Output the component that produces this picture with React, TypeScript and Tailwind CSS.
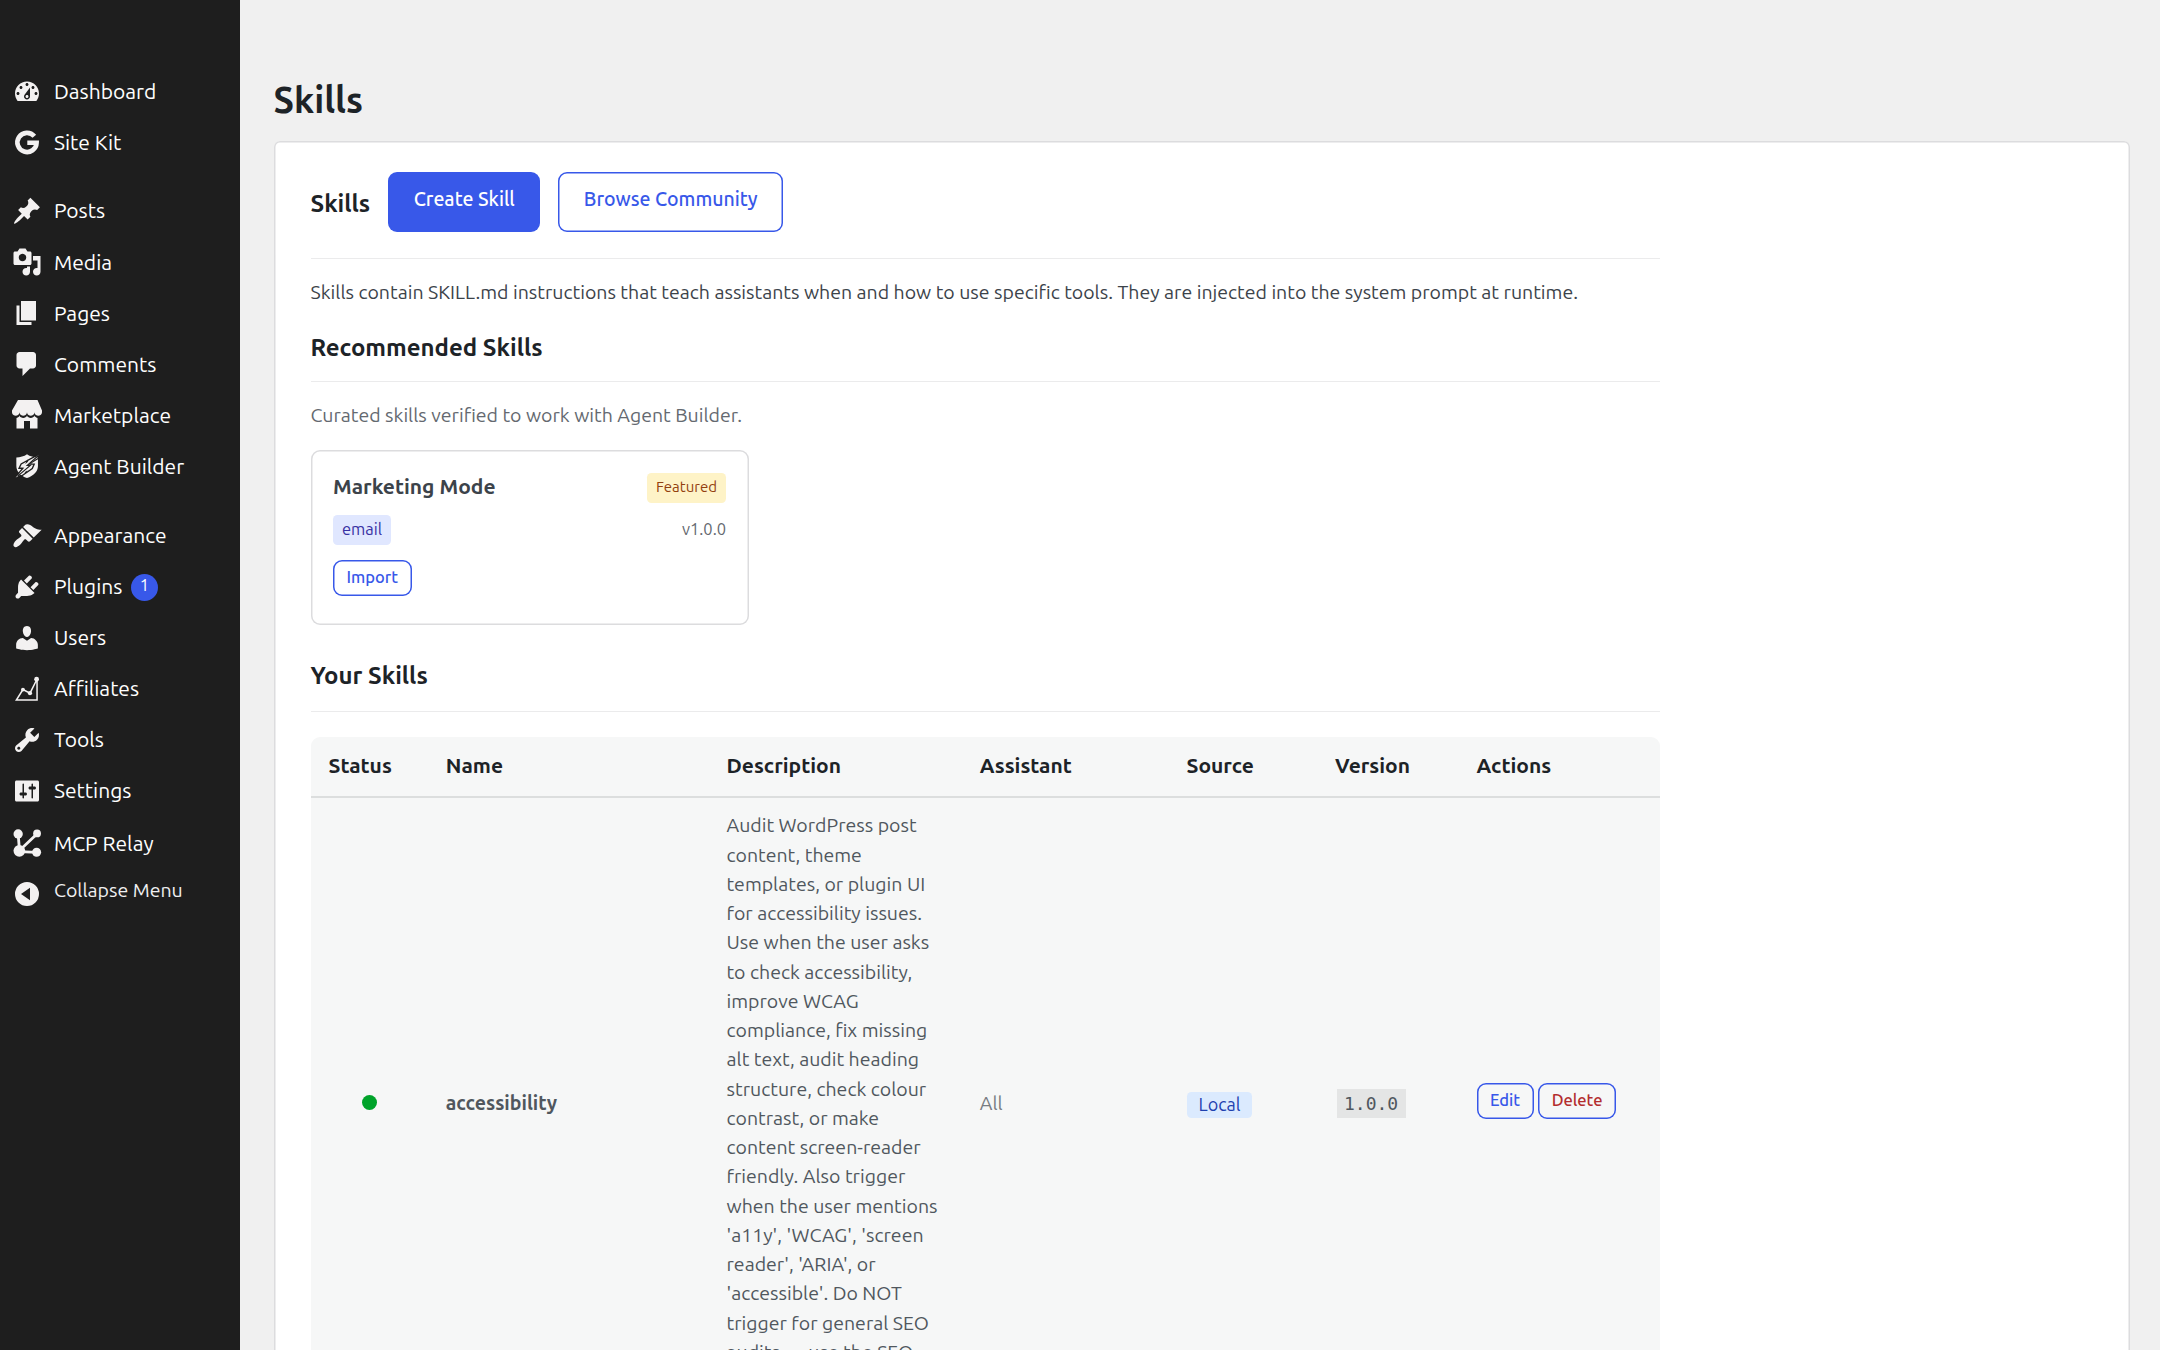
import { Fragment, type ReactNode } from "react";

type MenuEntry = {
  label: string;
  icon: ReactNode;
  badge?: number;
  gapBefore?: string;
  height?: string;
};

function Dashicon({ d }: { d: string }) {
  return (
    <svg viewBox="0 0 20 20" className="size-[30px] fill-current">
      <path d={d} />
    </svg>
  );
}

const MENU: MenuEntry[] = [
  {
    label: "Dashboard",
    icon: (
      <Dashicon d="M3.76 16h12.48c1.1-1.37 1.76-3.11 1.76-5 0-4.42-3.58-8-8-8s-8 3.58-8 8c0 1.89.66 3.63 1.76 5zM10 4c.55 0 1 .45 1 1s-.45 1-1 1-1-.45-1-1 .45-1 1-1zM6 6c.55 0 1 .45 1 1s-.45 1-1 1-1-.45-1-1 .45-1 1-1zm8 0c.55 0 1 .45 1 1s-.45 1-1 1-1-.45-1-1 .45-1 1-1zm-5.37 5.55L12 7v6c0 1.1-.9 2-2 2s-2-.9-2-2c0-.57.24-1.08.63-1.45zM4 10c.55 0 1 .45 1 1s-.45 1-1 1-1-.45-1-1 .45-1 1-1zm12 0c.55 0 1 .45 1 1s-.45 1-1 1-1-.45-1-1 .45-1 1-1zm-5 3c0-.55-.45-1-1-1s-1 .45-1 1 .45 1 1 1 1-.45 1-1z" />
    ),
  },
  {
    label: "Site Kit",
    icon: (
      <svg viewBox="0 0 20 20" className="size-[30px] fill-none stroke-current">
        <path d="M14.9 5.5A6.4 6.4 0 1 0 16.4 9.8H10.2" strokeWidth="3.1" />
      </svg>
    ),
  },
  {
    label: "Posts",
    gapBefore: "h-[17px]",
    height: "h-[51.75px]",
    icon: (
      <Dashicon d="M10.44 3.02l1.82-1.82 6.36 6.35-1.83 1.82c-1.05-.68-2.48-.57-3.41.36l-.75.75c-.92.93-1.04 2.35-.35 3.41l-1.83 1.82-2.41-2.41-2.8 2.79c-.42.42-3.38 2.71-3.8 2.29s1.86-3.39 2.28-3.81l2.79-2.79L4.1 9.36l1.83-1.82c1.05.69 2.48.57 3.4-.36l.75-.75c.93-.92 1.05-2.35.36-3.41z" />
    ),
  },
  {
    label: "Media",
    icon: (
      <Dashicon d="M13 11V4c0-.55-.45-1-1-1h-1.67L9 1H5L3.67 3H2c-.55 0-1 .45-1 1v7c0 .55.45 1 1 1h10c.55 0 1-.45 1-1zM7 4.5c1.38 0 2.5 1.12 2.5 2.5S8.38 9.5 7 9.5 4.5 8.38 4.5 7 5.62 4.5 7 4.5zM14 6h5v10.5c0 1.38-1.12 2.5-2.5 2.5S14 17.88 14 16.5s1.12-2.5 2.5-2.5c.17 0 .34.02.5.05V9h-3V6zm-4 8.05V13h2v3.5c0 1.38-1.12 2.5-2.5 2.5S7 17.88 7 16.5 8.12 14 9.5 14c.17 0 .34.02.5.05z" />
    ),
  },
  {
    label: "Pages",
    icon: <Dashicon d="M6 15V2h10v13H6zm-1 1h8v2H3V5h2v11z" />,
  },
  {
    label: "Comments",
    icon: (
      <Dashicon d="M5 2h9c1.1 0 2 .9 2 2v7c0 1.1-.9 2-2 2h-2l-5 5v-5H5c-1.1 0-2-.9-2-2V4c0-1.1.9-2 2-2z" />
    ),
  },
  {
    label: "Marketplace",
    icon: (
      <Dashicon d="M1 10c.41.29.96.43 1.5.43.55 0 1.09-.14 1.5-.43.62-.46 1-1.17 1-2 0 .83.37 1.54 1 2 .41.29.96.43 1.5.43.55 0 1.09-.14 1.5-.43.62-.46 1-1.17 1-2 0 .83.37 1.54 1 2 .41.29.96.43 1.51.43.54 0 1.08-.14 1.49-.43.62-.46 1-1.17 1-2 0 .83.37 1.54 1 2 .41.29.96.43 1.5.43.55 0 1.09-.14 1.5-.43.63-.46 1-1.17 1-2V7l-3-7H4L0 7v1c0 .83.37 1.54 1 2zm2 8.99h5v-5h4v5h5v-7c-.37-.05-.72-.22-1-.43-.63-.45-1-.73-1-1.56 0 .83-.38 1.11-1 1.56-.41.3-.95.43-1.49.44-.55 0-1.1-.14-1.51-.44-.63-.45-1-.73-1-1.56 0 .83-.38 1.11-1 1.56-.41.3-.95.43-1.5.44-.54 0-1.09-.14-1.5-.44-.63-.45-1-.73-1-1.57 0 .84-.38 1.12-1 1.57-.29.21-.63.38-1 .44v6.99z" />
    ),
  },
  {
    label: "Agent Builder",
    icon: (
      <svg viewBox="0 0 20 20" className="size-[30px]">
        <path
          className="fill-current"
          d="M10 2.2C12 3.6 14.5 4.3 17.3 4.3V10C17.3 13.7 14.3 16.7 10 18C5.7 16.7 2.9 13.7 2.9 10V4.3C5.5 4.3 8 3.6 10 2.2Z"
        />
        <path
          className="fill-none stroke-[#1e1e1e]"
          strokeWidth="0.9"
          d="M17.8 2.2L6.1 8.6L4.7 11.5H7.3L2 17.6M18.2 4.5L11.4 8.7H14.8L13.5 11.7L4.7 17.8M10.8 5.8L8.6 10H11.3L8.8 14.6"
        />
        <path
          className="fill-current"
          d="M18 2.5L8.5 8.8L7 10.8H9.6L2 18L11.6 12.2L13 10H10.4Z"
        />
        <path
          className="fill-none stroke-[#1e1e1e]"
          strokeWidth="0.8"
          d="M17.6 3L10.2 9.6H12.2L4 16.6"
        />
      </svg>
    ),
  },
  {
    label: "Appearance",
    gapBefore: "h-[18.25px]",
    icon: (
      <Dashicon d="M14.48 11.06L7.41 3.99l1.5-1.5c.5-.56 2.3-.47 3.51.32 1.21.8 1.43 1.28 2.91 2.1 1.18.64 2.45 1.26 4.45.85zm-.71.71L6.7 4.7 4.93 6.47c-.39.39-.39 1.02 0 1.41l1.06 1.06c.39.39.39 1.03 0 1.42-.6.6-1.43 1.11-2.21 1.69-.35.26-.7.53-1.01.84C1.43 14.23.4 16.08 1.4 17.07c.99 1 2.84-.03 4.18-1.36.31-.31.58-.66.85-1.02.57-.78 1.08-1.61 1.69-2.21.39-.39 1.02-.39 1.41 0l1.06 1.06c.39.39 1.02.39 1.41 0z" />
    ),
  },
  {
    label: "Plugins",
    badge: 1,
    icon: (
      <Dashicon d="M13.11 4.36L9.87 7.6 8 5.73l3.24-3.24c.35-.34 1.05-.2 1.56.32.52.51.66 1.21.31 1.55zm-8 1.77l.91-1.12 9.01 9.01-1.19.84c-.71.71-2.63 1.16-3.82 1.16H6.14L4.9 17.26c-.59.59-1.54.59-2.12 0-.59-.58-.59-1.53 0-2.12l1.24-1.24v-3.88c0-1.13.4-3.19 1.09-3.89zm7.26 3.97l3.24-3.24c.34-.35 1.04-.21 1.55.31.52.51.66 1.21.31 1.55l-3.24 3.25z" />
    ),
  },
  {
    label: "Users",
    icon: (
      <Dashicon d="M10 9.25c-2.27 0-2.73-3.44-2.73-3.44C7 4.02 7.82 2 9.97 2c2.16 0 2.98 2.02 2.71 3.81 0 0-.41 3.44-2.68 3.44zm0 2.57L12.72 10c2.39 0 4.52 2.33 4.52 4.53v2.49s-3.65 1.13-7.24 1.13c-3.65 0-7.24-1.13-7.24-1.13v-2.49c0-2.25 1.94-4.48 4.47-4.48z" />
    ),
  },
  {
    label: "Affiliates",
    icon: (
      <svg viewBox="0 0 20 20" className="size-[30px] fill-current">
        <path
          className="fill-none stroke-current"
          d="M16.7 3.8V17.4H2.9L7.3 10.4L12 12.8L16.4 4"
          strokeWidth="1"
        />
        <circle cx="7.3" cy="10.4" r="1.3" />
        <circle cx="12" cy="12.8" r="1.4" />
        <circle cx="16.4" cy="3.5" r="1.6" />
      </svg>
    ),
  },
  {
    label: "Tools",
    icon: (
      <Dashicon d="M16.68 9.77c-1.34 1.34-3.3 1.67-4.95.99l-5.41 6.52c-.99.99-2.59.99-3.58 0s-.99-2.59 0-3.57l6.52-5.42c-.68-1.65-.35-3.61.99-4.95 1.28-1.28 3.12-1.62 4.72-1.06l-2.89 2.89 2.82 2.82 2.86-2.87c.53 1.58.18 3.39-1.08 4.65zM3.81 16.21c.4.39 1.04.39 1.43 0 .4-.4.4-1.04 0-1.43-.39-.4-1.03-.4-1.43 0-.39.39-.39 1.03 0 1.43z" />
    ),
  },
  {
    label: "Settings",
    icon: (
      <Dashicon d="M18 16V4c0-.55-.45-1-1-1H3c-.55 0-1 .45-1 1v12c0 .55.45 1 1 1h14c.55 0 1-.45 1-1zM8 11h1c.55 0 1 .45 1 1s-.45 1-1 1H8v1.5c0 .28-.22.5-.5.5s-.5-.22-.5-.5V13H6c-.55 0-1-.45-1-1s.45-1 1-1h1V5.5c0-.28.22-.5.5-.5s.5.22.5.5V11zm5-2h-1c-.55 0-1-.45-1-1s.45-1 1-1h1V5.5c0-.28.22-.5.5-.5s.5.22.5.5V7h1c.55 0 1 .45 1 1s-.45 1-1 1h-1v5.5c0 .28-.22.5-.5.5s-.5-.22-.5-.5V9z" />
    ),
  },
  {
    label: "MCP Relay",
    height: "h-[54px]",
    icon: (
      <svg viewBox="0 0 20 20" className="size-[30px] fill-current">
        <path
          className="fill-none stroke-current"
          strokeWidth="1.9"
          d="M4.1 4L5 15L16.6 4M5 15.8L16.5 16.2"
        />
        <circle cx="4.1" cy="4" r="3.1" />
        <circle cx="16.7" cy="3.6" r="2.6" />
        <circle cx="4.9" cy="15.2" r="3.9" />
        <circle cx="16.4" cy="16.2" r="3" />
      </svg>
    ),
  },
];

const COLUMNS = [
  { label: "Status", width: "w-[117.25px]" },
  { label: "Name", width: "w-[280.75px]" },
  { label: "Description", width: "w-[253.25px]" },
  { label: "Assistant", width: "w-[206.75px]" },
  { label: "Source", width: "w-[148.5px]" },
  { label: "Version", width: "w-[141.5px]" },
  { label: "Actions", width: "w-[201.75px]" },
];

const DESCRIPTION_LINES = [
  "Audit WordPress post",
  "content, theme",
  "templates, or plugin UI",
  "for accessibility issues.",
  "Use when the user asks",
  "to check accessibility,",
  "improve WCAG",
  "compliance, fix missing",
  "alt text, audit heading",
  "structure, check colour",
  "contrast, or make",
  "content screen-reader",
  "friendly. Also trigger",
  "when the user mentions",
  "'a11y', 'WCAG', 'screen",
  "reader', 'ARIA', or",
  "'accessible'. Do NOT",
  "trigger for general SEO",
  "audits — use the SEO",
];

function Sidebar() {
  return (
    <nav className="w-[240px] shrink-0 bg-[#1e1e1e] pt-[66px] text-[#f3f1f1]">
      {MENU.map((item) => (
        <Fragment key={item.label}>
          {item.gapBefore && <div className={item.gapBefore} />}
          <a className={"flex items-center pl-3 " + (item.height ?? "h-[51px]")}>
            {item.icon}
            <span className="ml-3 text-[21px] leading-[27px] text-white">
              {item.label}
            </span>
            {item.badge && (
              <span className="mt-0.5 ml-[8.5px] flex size-[27px] justify-center rounded-full bg-[#3858e9] text-[16.5px] leading-[23px] text-white">
                {item.badge}
              </span>
            )}
          </a>
        </Fragment>
      ))}
      <button type="button" className="flex h-[42px] items-start pl-3">
        <svg viewBox="0 0 20 20" className="mt-[9px] size-[30px] fill-current">
          <path
            fillRule="evenodd"
            d="M10 2a8 8 0 1 0 0 16 8 8 0 0 0 0-16zM12 5.9V14.1L6 10z"
          />
        </svg>
        <span className="ml-3 text-[19.5px] leading-[40px] text-[#f0f0f1]">
          Collapse Menu
        </span>
      </button>
    </nav>
  );
}

function SmallButton({
  children,
  danger,
}: {
  children: ReactNode;
  danger?: boolean;
}) {
  return (
    <button
      type="button"
      className={
        "h-[36px] rounded-[9px] px-[13.5px] text-[16.5px] font-medium shadow-[inset_0_0_0_1.5px_#3858e9] " +
        (danger ? "text-[#b32d2e]" : "text-[#3858e9]")
      }
    >
      <span className="block h-[36px] leading-[34px]">{children}</span>
    </button>
  );
}

function SectionTitle({ children }: { children: ReactNode }) {
  return (
    <h2 className="text-2xl leading-[36px] font-semibold text-[#1d2327]">
      {children}
    </h2>
  );
}

function SkillCard() {
  return (
    <div className="mt-[20px] h-[175px] w-[438px] rounded-[9px] px-[22.5px] pt-[22.5px] shadow-[inset_0_0_0_1.5px_#dcdcde]">
      <div className="flex h-[30px] justify-between">
        <strong className="text-[21px] leading-[26px] font-semibold text-[#3c434a]">
          Marketing Mode
        </strong>
        <span className="h-[30px] rounded-[4.5px] bg-[#fef3c7] px-[9px] text-[15px] leading-[28px] text-[#92400e]">
          Featured
        </span>
      </div>
      <div className="mt-[12px] flex h-[30px] items-center justify-between text-[16.5px] leading-[28px]">
        <span className="h-[30px] rounded-[4.5px] bg-[#e0e7ff] px-[9px] text-[#3730a3]">
          email
        </span>
        <span className="h-[30px] text-[#646970]">v1.0.0</span>
      </div>
      <div className="mt-[15px]">
        <SmallButton>Import</SmallButton>
      </div>
    </div>
  );
}

function SkillsTable() {
  return (
    <div className="mt-[25px] rounded-t-[9px] bg-[#f6f7f7]">
      <div className="flex h-[61px] border-b-2 border-[#dcdede] text-[21px] leading-[57px] font-semibold text-[#1d2327]">
        {COLUMNS.map((col) => (
          <div key={col.label} className={"shrink-0 pl-[18px] " + col.width}>
            {col.label}
          </div>
        ))}
      </div>
      <div className="flex h-[611px] items-center text-[19.5px] leading-[29.25px] text-[#50575e]">
        <div className="flex w-[117.25px] shrink-0 justify-center pb-[2px]">
          <span className="size-[15px] rounded-full bg-[#00a32a]" />
        </div>
        <div className="w-[280.75px] shrink-0 pl-[18px] font-semibold">
          accessibility
        </div>
        <div className="h-[611px] w-[253.25px] shrink-0 pt-[13.25px] pl-[18px] whitespace-nowrap">
          {DESCRIPTION_LINES.map((line) => (
            <div key={line}>{line}</div>
          ))}
        </div>
        <div className="w-[206.75px] shrink-0 pl-[18px] text-[#787c82]">
          All
        </div>
        <div className="flex w-[148.5px] shrink-0 pt-[2px] pl-[18px]">
          <span className="h-[26px] rounded-[4.5px] bg-[#dbeafe] px-[12px] text-[18px] leading-[24px] text-[#1e40af]">
            Local
          </span>
        </div>
        <div className="flex w-[141.5px] shrink-0 pl-[19.5px]">
          <code className="h-[29px] bg-[#e4e5e5] px-[7.5px] font-['DejaVu_Sans_Mono',monospace] text-[18px] leading-[29px]">
            1.0.0
          </code>
        </div>
        <div className="flex w-[201.75px] shrink-0 gap-[4.5px] pb-[5px] pl-[18px]">
          <SmallButton>Edit</SmallButton>
          <SmallButton danger>Delete</SmallButton>
        </div>
      </div>
    </div>
  );
}

export default function App() {
  return (
    <div className="flex h-[1350px] w-[2160px] overflow-hidden bg-[#f0f0f0] font-[Ubuntu,'Noto_Sans',sans-serif]">
      <Sidebar />
      <main className="flex grow flex-col pt-[76px] pr-[30px] pl-[33.5px]">
        <h1 className="text-[36px] leading-[48px] font-semibold text-[#1d2327]">
          Skills
        </h1>
        <section className="mt-[17.25px] h-[1300px] shrink-0 rounded-t-[6px] bg-white pt-[31px] pl-[37px] shadow-[inset_0_0_0_1.5px_#dcdcde]">
          <div className="w-[1349.75px]">
            <div className="flex h-[60px] items-center">
              <div className="pt-1">
                <SectionTitle>Skills</SectionTitle>
              </div>
              <button
                type="button"
                className="ml-[18px] h-[60px] rounded-[9px] bg-[#3858e9] px-[25.5px] text-[19.5px] font-medium text-white"
              >
                <span className="block h-[60px] leading-[55px]">
                  Create Skill
                </span>
              </button>
              <button
                type="button"
                className="ml-[18px] h-[60px] rounded-[9px] px-[25.5px] text-[19.5px] font-medium text-[#3858e9] shadow-[inset_0_0_0_1.5px_#3858e9]"
              >
                <span className="block h-[60px] leading-[55px]">
                  Browse Community
                </span>
              </button>
            </div>
            <hr className="mt-[26px] border-[#ebebec]" />
            <p className="mt-[18px] text-[19.5px] leading-[30px] whitespace-nowrap text-[#3c434a]">
              Skills contain SKILL.md instructions that teach assistants when
              and how to use specific tools. They are injected into the system
              prompt at runtime.
            </p>
            <div className="mt-[23px]">
              <SectionTitle>Recommended Skills</SectionTitle>
            </div>
            <hr className="mt-[15px] border-[#ebebec]" />
            <p className="mt-[18px] text-[19.5px] leading-[30px] text-[#646970]">
              Curated skills verified to work with Agent Builder.
            </p>
            <SkillCard />
            <div className="mt-[32.75px]">
              <SectionTitle>Your Skills</SectionTitle>
            </div>
            <hr className="mt-[17px] border-[#ebebec]" />
            <SkillsTable />
          </div>
        </section>
      </main>
    </div>
  );
}
